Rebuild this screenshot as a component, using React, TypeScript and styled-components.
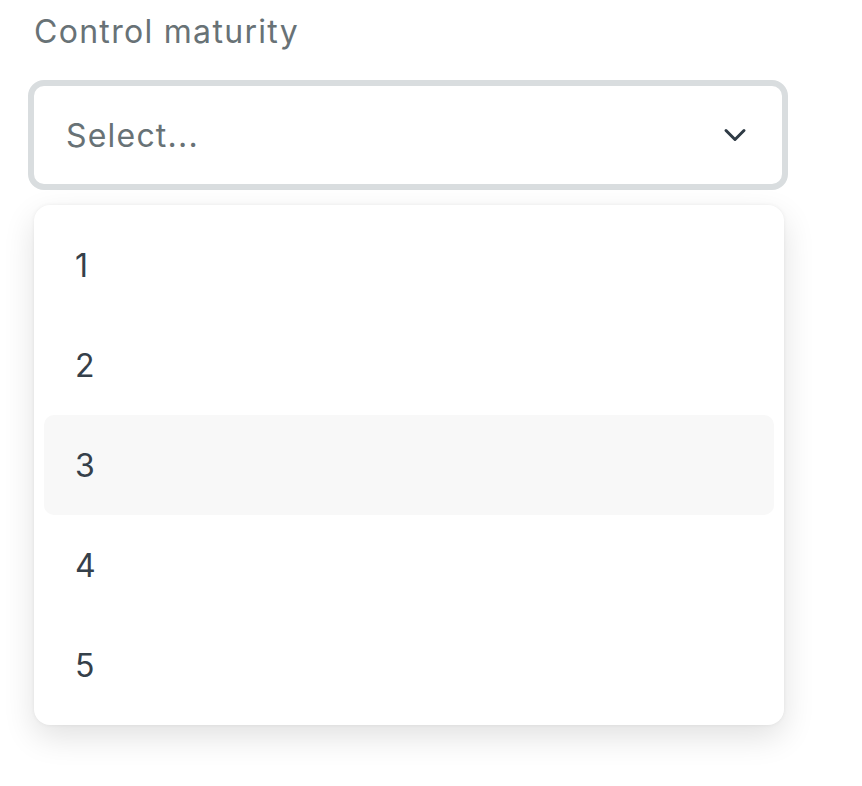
import React from "react";
import styled, { createGlobalStyle } from "styled-components";
import { ChevronDown } from "lucide-react";

const Global = createGlobalStyle`
  html, body { margin: 0; padding: 0; background: #ffffff; }
  body { font-family: Inter, "Noto Sans", "Liberation Sans", sans-serif; -webkit-font-smoothing: antialiased; }
`;

const Page = styled.div`
  padding: 8px 0 70px 28px;
  width: 760px;
`;

const Label = styled.div`
  font-size: 32px;
  line-height: 48px;
  letter-spacing: 1.3px;
  color: #687276;
  padding-left: 6px;
  margin-bottom: 24px;
`;

const Trigger = styled.div`
  box-sizing: border-box;
  height: 110px;
  border: 6px solid #d9dddf;
  border-radius: 16px;
  background: #ffffff;
  display: flex;
  align-items: center;
  justify-content: space-between;
  padding: 0 29px 0 32px;
`;

const Placeholder = styled.span`
  font-size: 32px;
  letter-spacing: 1.2px;
  color: #687276;
`;

const Chevron = styled(ChevronDown)`
  color: #2f3b45;
  display: block;
`;

const Menu = styled.div`
  box-sizing: border-box;
  margin: 15px 0 0 6px;
  width: 750px;
  padding: 10px;
  background: #ffffff;
  border-radius: 16px;
  box-shadow: 0 12px 32px rgba(0, 0, 0, 0.12), 0 0 4px rgba(0, 0, 0, 0.06);
  display: flex;
  flex-direction: column;
`;

const Item = styled.div<{ $active?: boolean }>`
  height: 100px;
  display: flex;
  align-items: center;
  padding-left: 31px;
  border-radius: 10px;
  font-size: 32px;
  color: #35404a;
  background: ${(p) => (p.$active ? "#f8f8f8" : "transparent")};
`;

export default function App() {
  const options = ["1", "2", "3", "4", "5"];
  return (
    <>
      <Global />
      <Page>
        <Label>Control maturity</Label>
        <Trigger>
          <Placeholder>Select...</Placeholder>
          <Chevron size={36} strokeWidth={2} />
        </Trigger>
        <Menu>
          {options.map((o) => (
            <Item key={o} $active={o === "3"}>
              {o}
            </Item>
          ))}
        </Menu>
      </Page>
    </>
  );
}
